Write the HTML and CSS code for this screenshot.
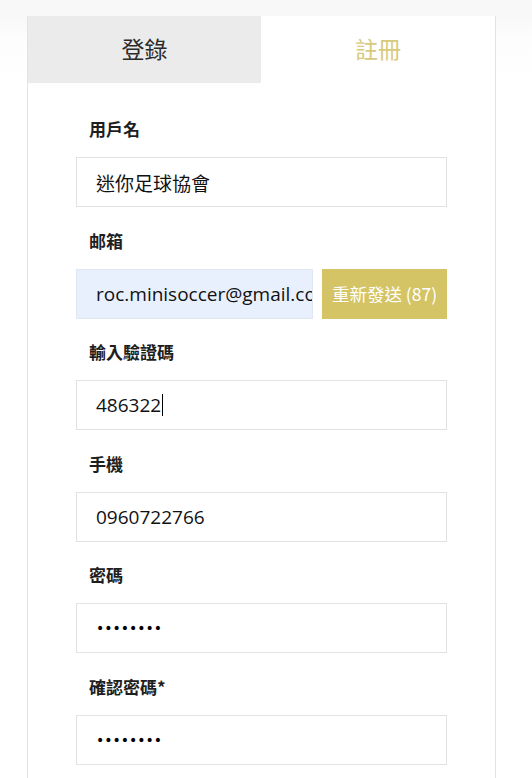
FILE: index.html
```html
<!DOCTYPE html>
<html lang="zh-Hant">
<head>
<meta charset="utf-8">
<title>註冊</title>
<link rel="stylesheet" href="styles.css">
</head>
<body>
<div class="page">
  <div class="card">
    <div class="tabs">
      <div class="tab tab-off">登錄</div>
      <div class="tab tab-on">註冊</div>
    </div>
    <form class="form">
      <div class="group">
        <div class="label">用戶名</div>
        <div class="field">迷你足球協會</div>
      </div>
      <div class="group">
        <div class="label">邮箱</div>
        <div class="row">
          <div class="field field-auto"><span class="clip">roc.minisoccer@gmail.com</span></div>
          <div class="btn">重新發送 (87)</div>
        </div>
      </div>
      <div class="group">
        <div class="label">輸入驗證碼</div>
        <div class="field field-latin">486322<span class="caret"></span></div>
      </div>
      <div class="group">
        <div class="label">手機</div>
        <div class="field field-latin">0960722766</div>
      </div>
      <div class="group">
        <div class="label">密碼</div>
        <div class="field field-dots">••••••••</div>
      </div>
      <div class="group">
        <div class="label">確認密碼*</div>
        <div class="field field-dots">••••••••</div>
      </div>
    </form>
  </div>
</div>
</body>
</html>
```

FILE: styles.css
```css
* { box-sizing: border-box; }
html, body { margin: 0; padding: 0; background: #fff; }
body {
  font-family: "Noto Sans CJK TC", "Noto Sans", sans-serif;
  color: #222;
}
.page {
  padding-top: 16px;
  padding-left: 27px;
  width: 532px;
  height: 778px;
  overflow: hidden;
  background: linear-gradient(#f8f8f8 16px, #fdfdfd 40px, #fff 90px);
}
.card {
  width: 469px;
  min-height: 800px;
  border-left: 1px solid #e3e3e3;
  border-right: 1px solid #e3e3e3;
  background: #fff;
}
.tabs {
  display: flex;
  height: 67px;
}
.tab {
  flex: 0 0 233px;
  display: flex;
  align-items: center;
  justify-content: center;
  font-size: 23px;
  line-height: 1;
  padding-bottom: 2px;
}
.tab-off { background: #ebebeb; color: #2a2a2a; }
.tab-on { flex: 1; background: #fff; color: #d8c97c; }
.form {
  padding: 34px 0 0 48px;
}
.group { margin-bottom: 21.5px; }
.label {
  padding-left: 13px;
  font-size: 17px;
  font-weight: 700;
  line-height: 24px;
  margin-bottom: 16px;
  color: #1e1e1e;
}
.field {
  width: 371px;
  height: 50px;
  border: 1px solid #e2e2e2;
  padding-left: 19px;
  display: flex;
  align-items: center;
  font-size: 19px;
  color: #111;
  white-space: nowrap;
  overflow: hidden;
}
.field-latin, .field-auto {
  font-family: "Open Sans", "Noto Sans", sans-serif;
  font-size: 19px;
}
.field-dots {
  font-family: "DejaVu Sans", sans-serif;
  font-size: 14px;
  color: #000;
  padding-left: 19px;
}
.row { display: flex; gap: 9px; }
.field-auto {
  width: 237px;
  background: #e8f0fe;
  border-color: #e1e7f0;
}
.clip { display: block; overflow: hidden; width: 216px; }
.btn {
  width: 125px;
  height: 50px;
  background: #d4c465;
  color: #fff;
  font-size: 17.5px;
  display: flex;
  align-items: center;
  justify-content: center;
  white-space: nowrap;
}
.caret {
  display: inline-block;
  width: 1px;
  height: 22px;
  background: #000;
  margin-left: 1px;
}
```
